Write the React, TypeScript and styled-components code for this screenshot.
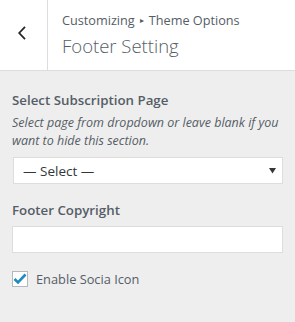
import React from "react";
import styled, { createGlobalStyle } from "styled-components";

const GlobalStyle = createGlobalStyle`
  html, body {
    margin: 0;
    padding: 0;
    background: #eeeeee;
  }
  body {
    font-family: "Open Sans", "Noto Sans", sans-serif;
    color: #555d66;
  }
`;

const Panel = styled.div`
  width: 295px;
  height: 322px;
  background: #eeeeee;
  overflow: hidden;
`;

const Header = styled.div`
  display: flex;
  height: 70px;
  background: #ffffff;
  border-bottom: 1px solid #dddddd;
`;

const BackButton = styled.div`
  width: 48px;
  box-sizing: border-box;
  display: flex;
  align-items: center;
  justify-content: center;
  padding: 0 4px 5px 0;
  border-right: 1px solid #dddddd;
`;

const HeaderInfo = styled.div`
  display: flex;
  flex-direction: column;
  padding: 11px 0 0 14px;
`;

const Crumbs = styled.div`
  font-size: 12.7px;
  line-height: 18px;
  color: #555d66;
  display: flex;
  align-items: center;
  gap: 5px;
`;

const Arrow = styled.span`
  font-size: 8px;
  color: #555d66;
`;

const Title = styled.div`
  font-size: 18.5px;
  font-weight: 300;
  line-height: 28px;
  margin-top: 3px;
  color: #555d66;
`;

const Body = styled.div`
  padding: 19px 12px 0 12px;
  display: flex;
  flex-direction: column;
`;

const Label = styled.div<{ $gap: number }>`
  font-size: 13.3px;
  font-weight: 600;
  line-height: 20px;
  color: #555d66;
  margin-bottom: ${(p) => p.$gap}px;
`;

const Description = styled.div`
  font-size: 12.5px;
  font-style: italic;
  line-height: 18px;
  color: #555d66;
  margin-bottom: 7px;
`;

const SelectBox = styled.div`
  height: 27px;
  margin-left: 1px;
  background: #ffffff;
  border: 1px solid #dddddd;
  box-sizing: border-box;
  display: flex;
  align-items: center;
  justify-content: space-between;
  padding: 0 6px 0 9px;
  font-size: 13.5px;
  color: #32373c;
  margin-bottom: 16px;
`;

const TextInput = styled.div`
  height: 27px;
  background: #ffffff;
  border: 1px solid #dddddd;
  box-sizing: border-box;
  margin-bottom: 17px;
`;

const CheckRow = styled.div`
  display: flex;
  align-items: center;
  gap: 8px;
`;

const CheckBox = styled.div`
  width: 16px;
  height: 16px;
  box-sizing: border-box;
  border: 1px solid #b4b9be;
  background: #ffffff;
  display: flex;
  align-items: center;
  justify-content: center;
`;

const CheckLabel = styled.span`
  font-size: 12.8px;
  color: #555d66;
`;

export default function App() {
  return (
    <Panel>
      <GlobalStyle />
      <Header>
        <BackButton>
          <svg width="8" height="14" viewBox="0 0 8 14">
            <path d="M7 0.8 L1.2 7 L7 13.2" fill="none" stroke="#23282d" strokeWidth="1.8" />
          </svg>
        </BackButton>
        <HeaderInfo>
          <Crumbs>
            Customizing <Arrow>▸</Arrow> Theme Options
          </Crumbs>
          <Title>Footer Setting</Title>
        </HeaderInfo>
      </Header>
      <Body>
        <Label $gap={4}>Select Subscription Page</Label>
        <Description>
          Select page from dropdown or leave blank if you want to hide this section.
        </Description>
        <SelectBox>
          <span>— Select —</span>
          <svg width="7" height="7" viewBox="0 0 7 7">
            <path d="M0 1 L7 1 L3.5 6.5 Z" fill="#32373c" />
          </svg>
        </SelectBox>
        <Label $gap={6}>Footer Copyright</Label>
        <TextInput />
        <CheckRow>
          <CheckBox>
            <svg width="14" height="12" viewBox="0 0 14 12">
              <path d="M1.5 6 L5 9.5 L12.5 1.5" fill="none" stroke="#1e8cbe" strokeWidth="2.6" />
            </svg>
          </CheckBox>
          <CheckLabel>Enable Socia Icon</CheckLabel>
        </CheckRow>
      </Body>
    </Panel>
  );
}
